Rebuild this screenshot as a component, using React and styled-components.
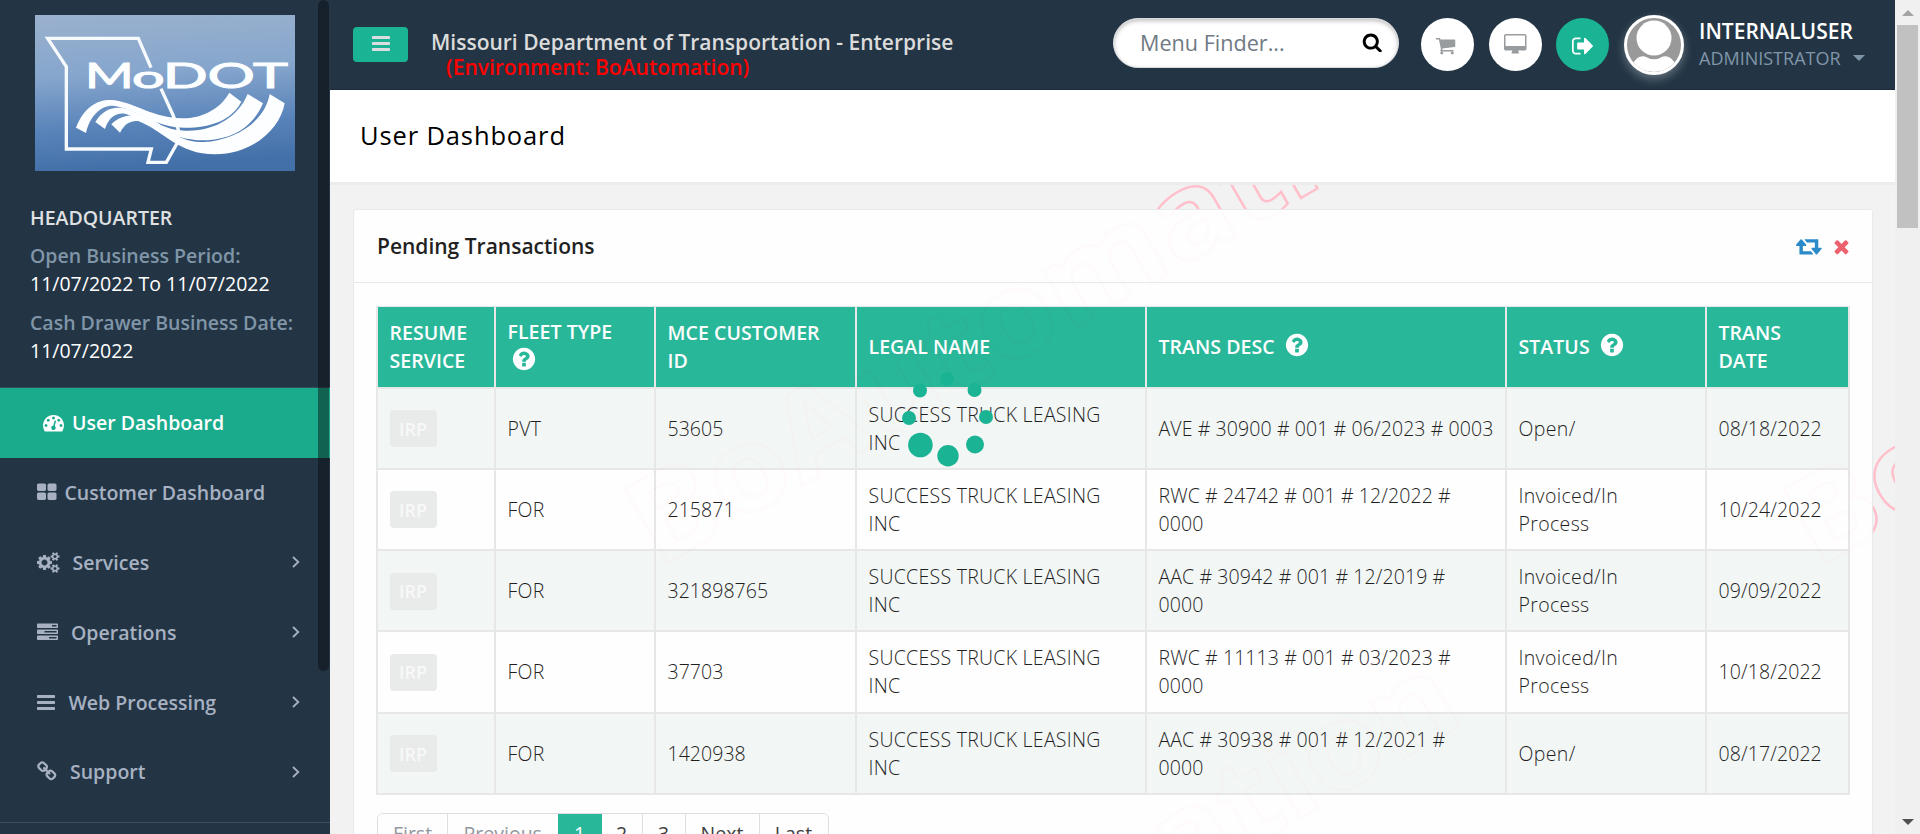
import React from 'react';
import styled, { createGlobalStyle } from 'styled-components';

const GlobalStyle = createGlobalStyle`
  *, *::before, *::after { box-sizing: border-box; }
  html, body { margin: 0; padding: 0; height: 834px; overflow: hidden; }
  body { font-family: "Open Sans", sans-serif; font-size: 19.5px; background: #f2f2f2; }
  svg { display: block; flex: none; }
`;

/* ---------- icons ---------- */
const GLYPHS = {
  tachometer: [1792, 'M384 1152q0-53-37.5-90.5t-90.5-37.5-90.5 37.5-37.5 90.5 37.5 90.5 90.5 37.5 90.5-37.5 37.5-90.5zm192-448q0-53-37.5-90.5t-90.5-37.5-90.5 37.5-37.5 90.5 37.5 90.5 90.5 37.5 90.5-37.5 37.5-90.5zm428 481l101-382q6-26-7.5-48.5t-38.5-29.5-48 6.5-30 39.5l-101 382q-60 5-107 43.5t-63 98.5q-20 77 20 146t117 89 146-20 89-117q16-60-6-117t-72-91zm660-33q0-53-37.5-90.5t-90.5-37.5-90.5 37.5-37.5 90.5 37.5 90.5 90.5 37.5 90.5-37.5 37.5-90.5zm-640-640q0-53-37.5-90.5t-90.5-37.5-90.5 37.5-37.5 90.5 37.5 90.5 90.5 37.5 90.5-37.5 37.5-90.5zm448 192q0-53-37.5-90.5t-90.5-37.5-90.5 37.5-37.5 90.5 37.5 90.5 90.5 37.5 90.5-37.5 37.5-90.5zm320 448q0 261-141 483-19 29-54 29h-1402q-35 0-54-29-141-221-141-483 0-182 71-348t191-286 286-191 348-71 348 71 286 191 191 286 71 348z'],
  large: [1664, 'M768 1024v384q0 52-38 90t-90 38h-512q-52 0-90-38t-38-90v-384q0-52 38-90t90-38h512q52 0 90 38t38 90zm0-768v384q0 52-38 90t-90 38h-512q-52 0-90-38t-38-90v-384q0-52 38-90t90-38h512q52 0 90 38t38 90zm896 768v384q0 52-38 90t-90 38h-512q-52 0-90-38t-38-90v-384q0-52 38-90t90-38h512q52 0 90 38t38 90zm0-768v384q0 52-38 90t-90 38h-512q-52 0-90-38t-38-90v-384q0-52 38-90t90-38h512q52 0 90 38t38 90z'],
  cogs: [1920, 'M896 896q0-106-75-181t-181-75-181 75-75 181 75 181 181 75 181-75 75-181zm768 512q0-52-38-90t-90-38-90 38-38 90q0 53 37.5 90.5t90.5 37.5 90.5-37.5 37.5-90.5zm0-1024q0-52-38-90t-90-38-90 38-38 90q0 53 37.5 90.5t90.5 37.5 90.5-37.5 37.5-90.5zm-384 421v185q0 10-7 19.5t-16 10.5l-155 24q-11 35-32 76 34 48 90 115 7 11 7 20 0 12-7 19-23 30-82.5 89.5t-78.5 59.5q-11 0-21-7l-115-90q-37 19-77 31-11 108-23 155-7 24-30 24h-186q-11 0-20-7.5t-10-17.5l-23-153q-34-10-75-31l-118 89q-7 7-20 7-11 0-21-8-144-133-144-160 0-9 7-19 10-14 41-53t47-61q-23-44-35-82l-152-24q-10-1-17-9.5t-7-19.5v-185q0-10 7-19.5t16-10.5l155-24q11-35 32-76-34-48-90-115-7-11-7-20 0-12 7-20 22-30 82-89t79-59q11 0 21 7l115 90q34-18 77-32 11-108 23-154 7-24 30-24h186q11 0 20 7.5t10 17.5l23 153q34 10 75 31l118-89q8-7 20-7 11 0 21 8 144 133 144 160 0 8-7 19-12 16-42 54t-45 60q23 48 34 82l152 23q10 2 17 10.5t7 19.5zm640 533v140q0 16-149 31-12 27-30 52 51 113 51 138 0 4-4 7-122 71-124 71-8 0-46-47t-52-68q-20 2-30 2t-30-2q-14 21-52 68t-46 47q-2 0-124-71-4-3-4-7 0-25 51-138-18-25-30-52-149-15-149-31v-140q0-16 149-31 13-29 30-52-51-113-51-138 0-4 4-7 4-2 35-20t59-34 30-16q8 0 46 46.5t52 67.5q20-2 30-2t30 2q51-71 92-112l6-2q4 0 124 70 4 3 4 7 0 25-51 138 17 23 30 52 149 15 149 31zm0-1024v140q0 16-149 31-12 27-30 52 51 113 51 138 0 4-4 7-122 71-124 71-8 0-46-47t-52-68q-20 2-30 2t-30-2q-14 21-52 68t-46 47q-2 0-124-71-4-3-4-7 0-25 51-138-18-25-30-52-149-15-149-31v-140q0-16 149-31 13-29 30-52-51-113-51-138 0-4 4-7 4-2 35-20t59-34 30-16q8 0 46 46.5t52 67.5q20-2 30-2t30 2q51-71 92-112l6-2q4 0 124 70 4 3 4 7 0 25-51 138 17 23 30 52 149 15 149 31z'],
  tasks: [1792, 'M1024 1408h640v-128h-640v128zm-384-512h1024v-128h-1024v128zm640-512h384v-128h-384v128zm512 832v256q0 26-19 45t-45 19h-1664q-26 0-45-19t-19-45v-256q0-26 19-45t45-19h1664q26 0 45 19t19 45zm0-512v256q0 26-19 45t-45 19h-1664q-26 0-45-19t-19-45v-256q0-26 19-45t45-19h1664q26 0 45 19t19 45zm0-512v256q0 26-19 45t-45 19h-1664q-26 0-45-19t-19-45v-256q0-26 19-45t45-19h1664q26 0 45 19t19 45z'],
  bars: [1536, 'M1536 1344v128q0 26-19 45t-45 19h-1408q-26 0-45-19t-19-45v-128q0-26 19-45t45-19h1408q26 0 45 19t19 45zm0-512v128q0 26-19 45t-45 19h-1408q-26 0-45-19t-19-45v-128q0-26 19-45t45-19h1408q26 0 45 19t19 45zm0-512v128q0 26-19 45t-45 19h-1408q-26 0-45-19t-19-45v-128q0-26 19-45t45-19h1408q26 0 45 19t19 45z'],
  link: [1664, 'M1456 1216q0-40-28-68l-208-208q-28-28-68-28-42 0-72 32 3 3 19 18.5t21.5 21.5 15 19 13 25.5 3.5 27.5q0 40-28 68t-68 28q-15 0-27.5-3.5t-25.5-13-19-15-21.5-21.5-18.5-19q-33 31-33 73 0 40 28 68l206 207q27 27 68 27 40 0 68-26l147-146q28-28 28-67zm-703-705q0-40-28-68l-206-207q-28-28-68-28-39 0-68 27l-147 146q-28 28-28 67 0 40 28 68l208 208q27 27 68 27 42 0 72-31-3-3-19-18.5t-21.5-21.5-15-19-13-25.5-3.5-27.5q0-40 28-68t68-28q15 0 27.5 3.5t25.5 13 19 15 21.5 21.5 18.5 19q33-31 33-73zm895 705q0 120-85 203l-147 146q-83 83-203 83-121 0-204-85l-206-207q-83-83-83-203 0-123 88-209l-88-88q-86 88-208 88-120 0-204-84l-208-208q-84-84-84-204t85-203l147-146q83-83 203-83 121 0 204 85l206 207q83 83 83 203 0 123-88 209l88 88q86-88 208-88 120 0 204 84l208 208q84 84 84 204z'],
  search: [1792, 'M1216 832q0-185-131.5-316.5t-316.5-131.5-316.5 131.5-131.5 316.5 131.5 316.5 316.5 131.5 316.5-131.5 131.5-316.5zm512 832q0 52-38 90t-90 38q-54 0-90-38l-343-342q-179 124-399 124-143 0-273.5-55.5t-225-150-150-225-55.5-273.5 55.5-273.5 150-225 225-150 273.5-55.5 273.5 55.5 225 150 150 225 55.5 273.5q0 220-124 399l343 343q37 37 37 90z'],
  question: [1792, 'M1024 1376v-192q0-14-9-23t-23-9h-192q-14 0-23 9t-9 23v192q0 14 9 23t23 9h192q14 0 23-9t9-23zm256-672q0-88-55.5-163t-138.5-116-170-41q-243 0-371 213-15 24 8 42l132 100q7 6 19 6 16 0 25-12 53-68 86-92 34-24 86-24 48 0 85.5 26t37.5 59q0 38-20 61t-68 45q-63 28-115.5 86.5t-52.5 125.5v36q0 14 9 23t23 9h192q14 0 23-9t9-23q0-19 21.5-49.5t54.5-49.5q32-18 49-28.5t46-35 44.5-48 28-60.5 12.5-81zm384 192q0 209-103 385.5t-279.5 279.5-385.5 103-385.5-103-279.5-279.5-103-385.5 103-385.5 279.5-279.5 385.5-103 385.5 103 279.5 279.5 103 385.5z'],
  cart: [1792, 'M704 1536q0 52-38 90t-90 38-90-38-38-90 38-90 90-38 90 38 38 90zm896 0q0 52-38 90t-90 38-90-38-38-90 38-90 90-38 90 38 38 90zm128-1088v512q0 24-16.5 42.5t-40.5 21.5l-1044 122q13 60 13 70 0 16-24 64h920q26 0 45 19t19 45-19 45-45 19h-1024q-26 0-45-19t-19-45q0-11 8-31.5t16-36 21.5-40 15.5-29.5l-177-823h-204q-26 0-45-19t-19-45 19-45 45-19h256q16 0 28.5 6.5t19.5 15.5 13 24.5 8 26 5.5 29.5 4.5 26h1201q26 0 45 19t19 45z'],
  desktop: [1920, 'M1792 992v-832q0-13-9.5-22.5t-22.5-9.5h-1600q-13 0-22.5 9.5t-9.5 22.5v832q0 13 9.5 22.5t22.5 9.5h1600q13 0 22.5-9.5t9.5-22.5zm128-832v1088q0 66-47 113t-113 47h-544q0 37 16 77.5t32 71 16 43.5q0 26-19 45t-45 19h-512q-26 0-45-19t-19-45q0-14 16-44t32-70 16-78h-544q-66 0-113-47t-47-113v-1088q0-66 47-113t113-47h1600q66 0 113 47t47 113z'],
  signout: [1664, 'M640 1440q0 4 1 20t.5 26.5-3 23.5-10 19.5-20.5 6.5h-320q-119 0-203.5-84.5t-84.5-203.5v-704q0-119 84.5-203.5t203.5-84.5h320q13 0 22.5 9.5t9.5 22.5q0 4 1 20t.5 26.5-3 23.5-10 19.5-20.5 6.5h-320q-66 0-113 47t-47 113v704q0 66 47 113t113 47h312l11.5 1 11.5 3 8 5.5 7 9 2 13.5zm928-544q0 26-19 45l-544 544q-19 19-45 19t-45-19-19-45v-288h-448q-26 0-45-19t-19-45v-384q0-26 19-45t45-19h448v-288q0-26 19-45t45-19 45 19l544 544q19 19 19 45z'],
  retweet: [1920, 'M1280 1504q0 13-9.5 22.5t-22.5 9.5h-960q-8 0-13.5-2t-9-7-5.5-8-3-11.5-1-11.5v-600h-192q-26 0-45-19t-19-45q0-24 15-41l320-384q19-22 49-22t49 22l320 384q15 17 15 41 0 26-19 45t-45 19h-192v384h576q16 0 25 11l160 192q7 10 7 21zm640-416q0 24-15 41l-320 384q-20 23-49 23t-49-23l-320-384q-15-17-15-41 0-26 19-45t45-19h192v-384h-576q-16 0-25-12l-160-192q-7-9-7-20 0-13 9.5-22.5t22.5-9.5h960q8 0 13.5 2t9 7 5.5 8 3 11.5 1 11.5v600h192q26 0 45 19t19 45z'],
  times: [1792, 'M1490 1322q0 40-28 68l-136 136q-28 28-68 28t-68-28l-294-294-294 294q-28 28-68 28t-68-28l-136-136q-28-28-28-68t28-68l294-294-294-294q-28-28-28-68t28-68l136-136q28-28 68-28t68 28l294 294 294-294q28-28 68-28t68 28l136 136q28 28 28 68t-28 68l-294 294 294 294q28 28 28 68z'],
};

const Icon = ({ name, size = 21 }) => {
  const [w, d] = GLYPHS[name];
  return (
    <svg width={(size * w) / 1792} height={size} viewBox={`0 0 ${w} 1792`} fill="currentColor">
      <path d={d} />
    </svg>
  );
};

/* ---------- shell ---------- */
const Shell = styled.div`
  display: grid;
  grid-template-columns: 330px 1565px 25px;
  height: 834px;
  overflow: hidden;
`;

/* ---------- sidebar ---------- */
const Sidebar = styled.aside`
  position: relative;
  background: #233545;
  overflow: hidden;
  display: flex;
  flex-direction: column;
`;
const LogoBox = styled.div`
  padding: 15px 0 0 35px;
  height: 204px;
`;
const SideThumb = styled.div`
  position: absolute;
  top: 0;
  right: 1px;
  width: 11px;
  height: 671px;
  border-radius: 6px;
  background: rgba(8, 8, 12, 0.45);
`;
const OfficeInfo = styled.div`
  height: 183px;
  padding-left: 30px;
  font-weight: 600;
  line-height: 28px;
  white-space: nowrap;
`;
const Office = styled.div`
  color: #dfe0e1;
  margin-bottom: 10px;
`;
const Label = styled.div`
  color: #8095a8;
`;
const Value = styled.div`
  color: #fff;
  font-weight: 400;
  line-height: 27px;
  margin-bottom: ${(p) => p.$gap || 0}px;
`;
const Nav = styled.nav`
  border-top: 1px solid #364d62;
  border-bottom: 1px solid #364d62;
  height: 436px;
`;
const NavItem = styled.a`
  display: flex;
  align-items: center;
  height: ${(p) => (p.$last ? 69 : 70)}px;
  padding: 0 30px 2px ${(p) => (p.$active ? 43 : 37)}px;
  gap: ${(p) => p.$gap}px;
  font-weight: 600;
  color: ${(p) => (p.$active ? '#fff' : '#a7b1c2')};
  background: ${(p) => (p.$active ? '#1aab8d' : 'transparent')};
`;
const NavText = styled.span`
  flex: 1;
  white-space: nowrap;
`;

/* ---------- top bar ---------- */
const Main = styled.main`
  position: relative;
  overflow: hidden;
  display: flex;
  flex-direction: column;
`;
const TopBar = styled.header`
  height: 90px;
  flex: none;
  background: #233545;
  border-bottom: 1px solid #1c2b3d;
  display: flex;
  align-items: flex-start;
  padding-left: 23px;
`;
const MenuButton = styled.button`
  width: 55px;
  height: 35px;
  margin-top: 27px;
  border: 0;
  border-radius: 4px;
  background: #1ab394;
  color: #dcdde0;
  display: flex;
  align-items: center;
  justify-content: center;
  padding: 0 0 2px;
`;
const Agency = styled.div`
  margin: 30px 0 0 23px;
  width: 682px;
  font-size: 21px;
  font-weight: 600;
  line-height: 25px;
  color: #dcdcdc;
  white-space: nowrap;
`;
const Environment = styled.div`
  padding-left: 15px;
  color: #ff0000;
`;
const Finder = styled.div`
  width: 286px;
  height: 50px;
  margin-top: 18px;
  border-radius: 25px;
  border: 1px solid #d8dadc;
  background: #fff;
  box-shadow: inset 0 2px 4px rgba(0, 0, 0, 0.25);
  display: flex;
  align-items: center;
  justify-content: space-between;
  padding: 0 16px 2px 26px;
  font-size: 21.6px;
  color: #6f7a84;
`;
const FinderIcon = styled.span`
  color: #000;
`;
const RoundButton = styled.button`
  width: 53px;
  height: 53px;
  flex: none;
  margin: 18px 0 0 ${(p) => p.$gap}px;
  padding: ${(p) => p.$pad || 0};
  border: 0;
  border-radius: 50%;
  background: ${(p) => (p.$accent ? '#1ab394' : '#fff')};
  color: ${(p) => (p.$accent ? '#fff' : '#999c9e')};
  display: flex;
  align-items: center;
  justify-content: center;
`;
const Avatar = styled.div`
  width: 60px;
  height: 60px;
  flex: none;
  margin: 15px 0 0 15px;
  border-radius: 50%;
  border: 3px solid #fff;
  background: #999;
  overflow: hidden;
  box-shadow: 0 4px 10px rgba(255, 255, 255, 0.3);
`;
const UserBlock = styled.div`
  margin: 16px 0 0 15px;
  white-space: nowrap;
`;
const UserName = styled.div`
  color: #fff;
  font-size: 21px;
  font-weight: 600;
  line-height: 30px;
`;
const UserRole = styled.div`
  display: flex;
  align-items: center;
  gap: 12px;
  color: #8095a8;
  font-size: 18px;
  line-height: 24px;
`;
const Caret = styled.span`
  border: 6px solid transparent;
  border-top-color: #8095a8;
  border-bottom: 0;
`;

/* ---------- page ---------- */
const PageHead = styled.div`
  height: 95px;
  flex: none;
  position: relative;
  background: #fff;
  border-bottom: 3px solid #ececec;
  padding: 27px 0 0 30px;
  font-size: 25.5px;
  font-weight: 500;
  letter-spacing: 0.87px;
  line-height: 36px;
  color: #000;
`;
const Watermark = styled.div`
  position: absolute;
  inset: 185px 0 0 0;
  overflow: hidden;
  pointer-events: none;
`;
const Panel = styled.section`
  position: relative;
  margin: 24px 22px 0 23px;
  height: 640px;
  background: #fff;
  border: 1px solid #e7eaec;
  border-radius: 3px;
  opacity: 0.93;
`;
const PanelHead = styled.div`
  height: 73px;
  border-bottom: 1px solid #e4e9ea;
  display: flex;
  align-items: center;
  padding: 0 20px 0 23px;
`;
const PanelTitle = styled.h5`
  flex: 1;
  margin: 0;
  font-size: 21px;
  font-weight: 600;
  color: #111;
`;
const Tool = styled.span`
  color: ${(p) => p.$color};
  margin-left: ${(p) => p.$gap || 0}px;
`;
const Grid = styled.table`
  width: 1472px;
  margin: 23px 0 0 22px;
  table-layout: fixed;
  border-collapse: collapse;
  line-height: 28px;
  color: #111;
`;
const Th = styled.th`
  width: ${(p) => p.$w}px;
  height: 81px;
  padding: 0 11.5px;
  text-align: left;
  font-weight: 600;
  letter-spacing: 0.05px;
  white-space: pre;
  color: #fff;
  background: #1ab394;
  border: solid #e7e7e7;
  border-width: 1px 2px;
`;
const Help = styled.span`
  display: inline-block;
  vertical-align: -4px;
  margin-left: ${(p) => (p.$below ? 3 : 9)}px;
`;
const Tr = styled.tr`
  background: ${(p) => (p.$odd ? '#f3f7f6' : '#fff')};
`;
const Td = styled.td`
  height: 81.25px;
  padding: 1px 11.5px 0;
  font-weight: 300;
  white-space: pre;
  letter-spacing: ${(p) => p.$track ?? 0.05}px;
  border: 2px solid #e7e7e7;
`;
const IrpButton = styled.button`
  display: block;
  width: 47px;
  height: 37px;
  padding: 0;
  border: 0;
  border-radius: 4px;
  background: #e9eaea;
  color: #f9f9f9;
  font: 600 18px "Open Sans", sans-serif;
`;
const Pager = styled.div`
  display: flex;
  width: 452px;
  height: 50px;
  margin: 18px 0 0 23px;
  border: 1px solid #ddd;
  border-radius: 6px;
  overflow: hidden;
`;
const PageLink = styled.span`
  width: ${(p) => p.$w}px;
  flex: none;
  padding-top: 6px;
  text-align: center;
  line-height: 28px;
  border-right: ${(p) => (p.$bare ? 0 : 1)}px solid #ddd;
  background: ${(p) => (p.$on ? '#1ab394' : '#fff')};
  color: ${(p) => (p.$on ? '#fff' : p.$off ? '#8c9399' : '#333')};
`;
const Spinner = styled.div`
  position: absolute;
  left: 570px;
  top: 365px;
  z-index: 2;
`;

/* ---------- scrollbar ---------- */
const ScrollTrack = styled.div`
  background: #f0f0f0;
  display: flex;
  flex-direction: column;
  align-items: center;
`;
const Arrow = styled.svg`
  margin: 10px 0 9px;
`;
const ScrollThumb = styled.div`
  width: 21px;
  height: 203px;
  background: #c1c1c1;
  margin-bottom: auto;
`;

const Logo = () => (
  <svg width="260" height="156" viewBox="0 0 780 468">
    <defs>
      <linearGradient id="sky" x1="0" y1="0" x2="0.1" y2="1">
        <stop offset="0" stopColor="#9ab1cd" />
        <stop offset="0.4" stopColor="#86a6cd" />
        <stop offset="0.75" stopColor="#5883b9" />
        <stop offset="1" stopColor="#4470a9" />
      </linearGradient>
    </defs>
    <rect width="780" height="468" fill="url(#sky)" />
    <path
      d="M348 158L310 70H38L94 155V402H349L339 442H394L428 382L432 350L414 300L378 221"
      fill="none" stroke="#f6fafd" strokeWidth="10"
    />
    <g fill="#fcfeff">
      <path d="M123 338C150 270 195 250 240 256C300 265 360 310 440 310C510 310 560 275 583 233L619 260C590 315 530 338 450 338C360 338 300 280 235 272C200 270 165 300 153 354Z" />
      <path d="M181 321C200 290 225 275 262 279C320 290 370 345 450 347C540 350 610 305 638 237L684 265C650 345 580 376 505 376C410 376 350 320 270 296C240 293 220 310 210 342Z" />
      <path d="M229 328C250 305 285 297 320 301C380 315 420 385 505 381C600 376 690 320 704 237L749 265C735 345 650 418 540 418C430 418 390 350 310 318C285 318 270 325 255 353Z" />
      <g fontFamily="Lato" fontWeight="400" stroke="#fcfeff" strokeWidth="3">
        <text x="150" y="219" fontSize="105" textLength="146" lengthAdjust="spacingAndGlyphs">M</text>
        <text x="291" y="219" fontSize="92" textLength="98" lengthAdjust="spacingAndGlyphs">o</text>
        <text x="383" y="219" fontSize="105" textLength="376" lengthAdjust="spacingAndGlyphs">DOT</text>
      </g>
    </g>
  </svg>
);

const Chevron = () => (
  <svg width="8" height="12" viewBox="0 0 8 12" fill="none" stroke="currentColor" strokeWidth="1.8">
    <path d="M1 1L6.3 6L1 11" />
  </svg>
);

const NAV = [
  { icon: 'tachometer', text: 'User Dashboard', gap: 8, active: true },
  { icon: 'large', text: 'Customer Dashboard', gap: 8 },
  { icon: 'cogs', text: 'Services', gap: 13, more: true },
  { icon: 'tasks', text: 'Operations', gap: 13, more: true },
  { icon: 'bars', text: 'Web Processing', gap: 13.4, more: true },
  { icon: 'link', text: 'Support', gap: 13.5, more: true, last: true },
];

const ROWS = [
  ['PVT', '53605', 'AVE # 30900 # 001 # 06/2023 # 0003', 'Open/', '08/18/2022'],
  ['FOR', '215871', 'RWC # 24742 # 001 # 12/2022 #\n0000', 'Invoiced/In\nProcess', '10/24/2022'],
  ['FOR', '321898765', 'AAC # 30942 # 001 # 12/2019 #\n0000', 'Invoiced/In\nProcess', '09/09/2022'],
  ['FOR', '37703', 'RWC # 11113 # 001 # 03/2023 #\n0000', 'Invoiced/In\nProcess', '10/18/2022'],
  ['FOR', '1420938', 'AAC # 30938 # 001 # 12/2021 #\n0000', 'Open/', '08/17/2022'],
];

const MARKS = [[328, 384], [1487, 384], [328, 1004]];

const DOTS = [
  [47, 14, 7], [20, 25.5, 7], [74.5, 25, 7], [9, 53, 7],
  [86, 52, 7], [20.4, 80, 12.3], [48, 90.7, 10.7], [75, 79.5, 9],
];

export default function App() {
  return (
    <Shell>
      <GlobalStyle />
      <Sidebar>
        <LogoBox><Logo /></LogoBox>
        <OfficeInfo>
          <Office>HEADQUARTER</Office>
          <Label>Open Business Period:</Label>
          <Value $gap={12}>11/07/2022 To 11/07/2022</Value>
          <Label>Cash Drawer Business Date:</Label>
          <Value>11/07/2022</Value>
        </OfficeInfo>
        <Nav>
          {NAV.map((n) => (
            <NavItem key={n.text} $active={n.active} $gap={n.gap} $last={n.last}>
              <Icon name={n.icon} />
              <NavText>{n.text}</NavText>
              {n.more && <Chevron />}
            </NavItem>
          ))}
        </Nav>
        <SideThumb />
      </Sidebar>

      <Main>
        <TopBar>
          <MenuButton><Icon name="bars" /></MenuButton>
          <Agency>
            Missouri Department of Transportation - Enterprise
            <Environment>(Environment: BoAutomation)</Environment>
          </Agency>
          <Finder>
            Menu Finder...
            <FinderIcon><Icon name="search" size={20.5} /></FinderIcon>
          </Finder>
          <RoundButton $gap={22} $pad="2px 5px 0 0"><Icon name="cart" /></RoundButton>
          <RoundButton $gap={15}><Icon name="desktop" /></RoundButton>
          <RoundButton $gap={14} $accent $pad="3px 0 0 2px"><Icon name="signout" size={24} /></RoundButton>
          <Avatar>
            <svg width="54" height="54" viewBox="0 0 54 54">
              <circle cx="27" cy="20" r="17.5" fill="#fff" />
              <path d="M6 46Q10 37 18 38.5Q27 44 36 38.5Q44 37 48 46Q39 54 27 54Q15 54 6 46Z" fill="#fff" />
            </svg>
          </Avatar>
          <UserBlock>
            <UserName>INTERNALUSER</UserName>
            <UserRole>ADMINISTRATOR <Caret /></UserRole>
          </UserBlock>
        </TopBar>
        <Watermark>
          <svg width="1565" height="649" viewBox="0 0 1565 649">
            {MARKS.map(([x, y]) => (
              <text
                key={`${x}-${y}`} transform={`translate(${x} ${y}) rotate(-30)`}
                fontFamily="Open Sans" fontWeight="700" fontSize="120" textLength="935"
                lengthAdjust="spacingAndGlyphs"
                fill="none" stroke="#ffc0cb" strokeWidth="2.4"
              >BoAutomation</text>
            ))}
          </svg>
        </Watermark>
        <PageHead>User Dashboard</PageHead>
        <Panel>
          <PanelHead>
            <PanelTitle>Pending Transactions</PanelTitle>
            <Tool $color="#1c84c6"><Icon name="retweet" size={24} /></Tool>
            <Tool $color="#ed5565" $gap={9}><Icon name="times" size={21} /></Tool>
          </PanelHead>
          <Grid>
            <thead>
              <tr>
                <Th $w={118}>{'RESUME\nSERVICE'}</Th>
                <Th $w={160}>{'FLEET TYPE\n'}<Help $below><Icon name="question" size={26} /></Help></Th>
                <Th $w={201}>{'MCE CUSTOMER\nID'}</Th>
                <Th $w={290}>LEGAL NAME</Th>
                <Th $w={360}>TRANS DESC<Help><Icon name="question" size={26} /></Help></Th>
                <Th $w={200}>STATUS<Help><Icon name="question" size={26} /></Help></Th>
                <Th $w={143}>{'TRANS\nDATE'}</Th>
              </tr>
            </thead>
            <tbody>
              {ROWS.map(([fleet, id, desc, status, date], i) => (
                <Tr key={id} $odd={i % 2 === 0}>
                  <Td><IrpButton>IRP</IrpButton></Td>
                  <Td $track={0.3}>{fleet}</Td>
                  <Td>{id}</Td>
                  <Td $track={0.27}>{'SUCCESS TRUCK LEASING\nINC'}</Td>
                  <Td $track={0.1}>{desc}</Td>
                  <Td $track={0.35}>{status}</Td>
                  <Td $track={0.1}>{date}</Td>
                </Tr>
              ))}
            </tbody>
          </Grid>
          <Pager>
            <PageLink $w={70} $off>First</PageLink>
            <PageLink $w={109.5} $off $bare>Previous</PageLink>
            <PageLink $w={44} $on $bare>1</PageLink>
            <PageLink $w={41}>2</PageLink>
            <PageLink $w={43}>3</PageLink>
            <PageLink $w={74}>Next</PageLink>
            <PageLink $w={68} $bare>Last</PageLink>
          </Pager>
        </Panel>
        <Spinner>
          <svg width="100" height="105" viewBox="0 0 100 105" fill="#1ab394">
            {DOTS.map(([cx, cy, r]) => <circle key={`${cx}-${cy}`} cx={cx} cy={cy} r={r} />)}
          </svg>
        </Spinner>
      </Main>

      <ScrollTrack>
        <Arrow width="12" height="6" viewBox="0 0 12 6"><path d="M0 6L6 0L12 6Z" fill="#a3a3a3" /></Arrow>
        <ScrollThumb />
        <Arrow width="12" height="6" viewBox="0 0 12 6"><path d="M0 0L6 6L12 0Z" fill="#505050" /></Arrow>
      </ScrollTrack>
    </Shell>
  );
}
